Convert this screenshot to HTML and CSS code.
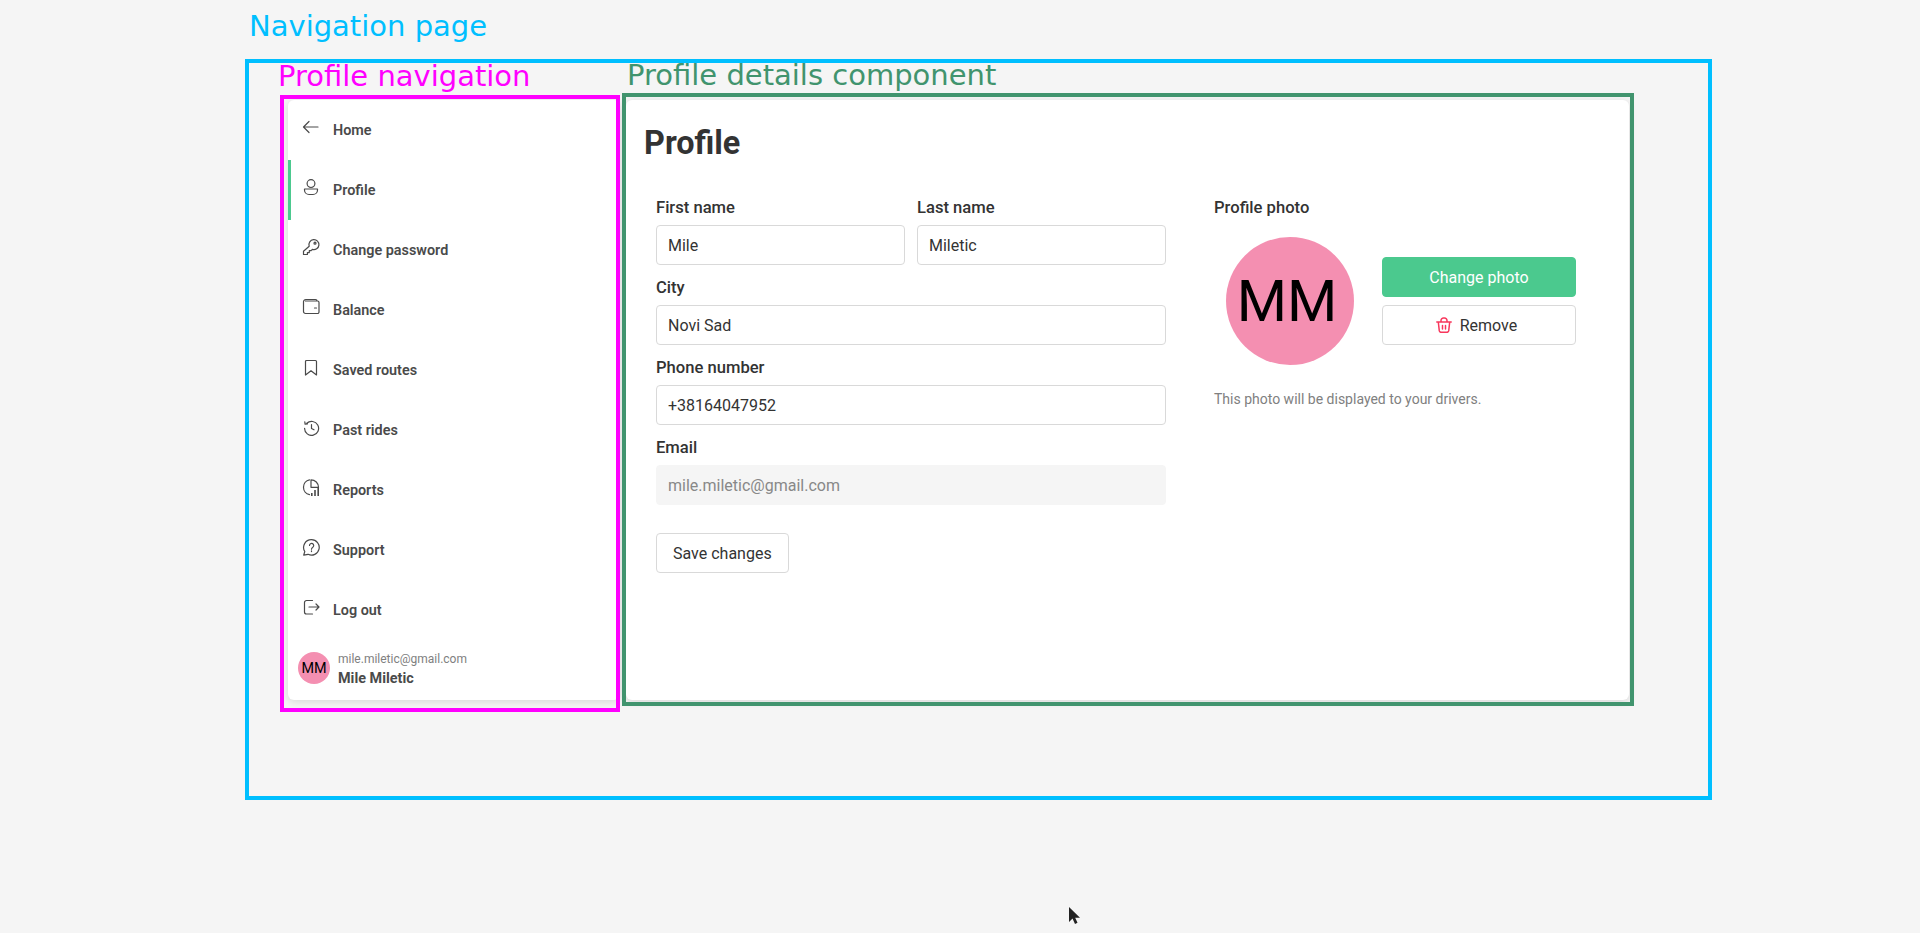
FILE: index.html
```html
<!DOCTYPE html>
<html lang="en">
<head>
  <meta charset="UTF-8">
  <title>Profile</title>
  <link rel="stylesheet" href="styles.css">
</head>
<body>
  <div class="layout">
    <nav class="side-nav">
      <a class="nav-item">
        <svg class="nav-icon" viewBox="0 0 18 18"><path d="M16 9H1.500M7 3.500 1.500 9 7 14.500"/></svg>
        <span>Home</span>
      </a>
      <a class="nav-item active">
        <svg class="nav-icon" viewBox="0 0 18 18"><circle cx="9" cy="5.600" r="3.900"/><path d="M2.500 11h13v1a4.500 4.500 0 0 1-4.500 4.500H7A4.500 4.500 0 0 1 2.500 12z"/></svg>
        <span>Profile</span>
      </a>
      <a class="nav-item">
        <svg class="nav-icon" viewBox="0 0 18 18"><path d="M7.200 8.200a5 5 0 1 1 3.200 3.200l-1.300 1.300H7.300v1.900H5.400v1.900H1.500v-3.300z"/><circle cx="13" cy="5.200" r="1"/></svg>
        <span>Change password</span>
      </a>
      <a class="nav-item">
        <svg class="nav-icon" viewBox="0 0 18 18"><path d="M3.500 3h12a1.500 1.500 0 0 1 1.500 1.500v9.500a1.500 1.500 0 0 1-1.500 1.500h-12A2 2 0 0 1 1.500 13.500v-9A2.500 2.500 0 0 1 4 1.500h9.500a1.500 1.500 0 0 1 1.500 1.500M12.500 10h2"/></svg>
        <span>Balance</span>
      </a>
      <a class="nav-item">
        <svg class="nav-icon" viewBox="0 0 18 18"><path d="M4.500 2.500h9a1 1 0 0 1 1 1v13.500L9 12.800 3.500 17V3.500a1 1 0 0 1 1-1z"/></svg>
        <span>Saved routes</span>
      </a>
      <a class="nav-item">
        <svg class="nav-icon" viewBox="0 0 18 18"><path d="M4.800 5.300a7 7 0 1 1-2.200 5M2.800 3.800l.3 2.300 2.400-.3M9.500 6.500v4l2.500 1.300"/></svg>
        <span>Past rides</span>
      </a>
      <a class="nav-item">
        <svg class="nav-icon" viewBox="0 0 18 18"><path d="M7.500 1.900a7.500 7.500 0 0 0 0 14.700M9 1.800a7.500 7.500 0 0 1 7.500 7.500H9z"/><path class="bars" d="M9.800 18v-3M13 18v-6M16.200 18V9"/></svg>
        <span>Reports</span>
      </a>
      <a class="nav-item">
        <svg class="nav-icon" viewBox="0 0 18 18"><path d="M9.500 1.700a7.700 7.700 0 1 1-3.400 14.600l-4.400.9 1.100-3.700A7.700 7.700 0 0 1 9.500 1.700z"/><path d="M7.500 7.500a2.100 2.100 0 1 1 3.300 1.700c-.9.600-1.300 1-1.300 2"/><path d="M9.500 12.800v.8"/></svg>
        <span>Support</span>
      </a>
      <a class="nav-item">
        <svg class="nav-icon" viewBox="0 0 18 18"><path d="M10.500 2.500h-6a2 2 0 0 0-2 2v9.500a2 2 0 0 0 2 2h6M7 9h10M14 6l3 3-3 3"/></svg>
        <span>Log out</span>
      </a>
      <div class="nav-user">
        <div class="avatar-small">MM</div>
        <div class="user-text">
          <div class="user-email">mile.miletic@gmail.com</div>
          <div class="user-name">Mile Miletic</div>
        </div>
      </div>
    </nav>

    <main class="details">
      <h1 class="title">Profile</h1>
      <div class="details-body">
        <form class="form">
          <div class="row">
            <div class="field">
              <label>First name</label>
              <input type="text" value="Mile">
            </div>
            <div class="field">
              <label>Last name</label>
              <input type="text" value="Miletic">
            </div>
          </div>
          <div class="field">
            <label>City</label>
            <input type="text" value="Novi Sad">
          </div>
          <div class="field">
            <label>Phone number</label>
            <input type="text" value="+38164047952">
          </div>
          <div class="field">
            <label>Email</label>
            <input class="disabled" type="text" value="mile.miletic@gmail.com" disabled>
          </div>
          <button class="btn save" type="button">Save changes</button>
        </form>

        <section class="photo">
          <label>Profile photo</label>
          <div class="photo-row">
            <div class="avatar-big">MM</div>
            <div class="photo-buttons">
              <button class="btn green" type="button">Change photo</button>
              <button class="btn remove" type="button">
                <svg class="trash" viewBox="0 0 16 16"><path d="M.8 5h14.400M2.300 5l1 8.900A1.800 1.800 0 0 0 5.100 15.300h5.800a1.800 1.800 0 0 0 1.800-1.400l1-8.900M5 5V3.500a2.500 2.500 0 0 1 2.500-2.500h1A2.500 2.500 0 0 1 11 3.500V5M6.500 8.500v3.500M9.500 8.500v3.500"/></svg>
                Remove
              </button>
            </div>
          </div>
          <p class="photo-note">This photo will be displayed to your drivers.</p>
        </section>
      </div>
    </main>
  </div>

  <!-- annotation frames drawn over the screen -->
  <div class="frame frame-page"></div>
  <div class="frame frame-nav"></div>
  <div class="frame frame-details"></div>
  <div class="note note-page">Navigation page</div>
  <div class="note note-nav">Profile navigation</div>
  <div class="note note-details">Profile details component</div>

  <svg class="cursor" viewBox="0 0 12 18"><path d="M1 0v15l3.500-3.500L7 17l2.500-1.200-2.300-5H12z"/></svg>
</body>
</html>
```

FILE: styles.css
```css
* {
  box-sizing: border-box;
}
html, body {
  height: 100%;
}
body {
  margin: 0;
  background-color: #f5f5f5;
  font-family: Roboto, sans-serif;
  color: #333;
  overflow: hidden;
  position: relative;
}
.layout {
  display: flex;
  gap: 6px;
  padding: 100px 0 0 288px;
}

/* left nav */
.side-nav {
  width: 332px;
  height: 600px;
  background-color: #fff;
  border-radius: 6px;
  box-shadow: 0 2px 8px rgba(0, 0, 0, 0.12);
}
.nav-item {
  display: flex;
  align-items: center;
  gap: 13px;
  height: 60px;
  padding-left: 14px;
  font-size: 14.4px;
  font-weight: 600;
  color: #4a4a4a;
}
.nav-item.active {
  border-left: 3px solid #4cc98f;
  padding-left: 11px;
}
.nav-icon {
  width: 18px;
  height: 18px;
  margin-bottom: 6px;
  flex-shrink: 0;
  fill: none;
  stroke: #4a4a4a;
  stroke-width: 1.2;
  stroke-linecap: round;
  stroke-linejoin: round;
}
.nav-icon .bars {
  stroke-width: 1.6;
  stroke-linecap: butt;
}
.nav-user {
  display: flex;
  align-items: center;
  gap: 8px;
  height: 60px;
  padding: 0 0 4px 10px;
}
.avatar-small {
  width: 32px;
  height: 32px;
  border-radius: 50%;
  background-color: #f48fb1;
  color: #000;
  font-size: 14.4px;
  display: flex;
  align-items: center;
  justify-content: center;
}
.user-text {
  margin-top: 3px;
}
.user-email {
  font-size: 12px;
  line-height: 18px;
  color: #808080;
}
.user-name {
  font-size: 14.4px;
  line-height: 22px;
  font-weight: 700;
  color: #4a4a4a;
}

/* details card */
.details {
  width: 1003px;
  height: 600px;
  background-color: #fff;
  border-radius: 6px;
  box-shadow: 0 2px 8px rgba(0, 0, 0, 0.12);
  padding: 21px 18px;
}
.title {
  margin: 0;
  font-size: 32.4px;
  line-height: 44px;
  font-weight: 700;
  color: #333;
}
.details-body {
  display: flex;
  gap: 48px;
  padding: 30px 12px 0;
}
.form {
  width: 510px;
}
.row {
  display: flex;
  gap: 12px;
}
.row .field {
  flex: 1;
}
.field {
  margin-bottom: 10px;
}
label {
  display: block;
  height: 30px;
  padding-top: 1px;
  font-size: 16.6px;
  line-height: 24px;
  font-weight: 500;
  color: #333;
}
input {
  display: block;
  width: 100%;
  height: 40px;
  padding: 0 11px;
  font-family: Roboto, sans-serif;
  font-size: 16px;
  color: #333;
  background-color: #fff;
  border: 1px solid #d9d9d9;
  border-radius: 4px;
}
input.disabled {
  background-color: #f5f5f5;
  border-color: #f5f5f5;
  color: #888;
}
.btn {
  display: flex;
  align-items: center;
  justify-content: center;
  gap: 8px;
  height: 40px;
  padding: 0 16px;
  font-family: Roboto, sans-serif;
  font-size: 16px;
  color: #333;
  background-color: #fff;
  border: 1px solid #d9d9d9;
  border-radius: 4px;
}
.btn.green {
  background-color: #4bc98e;
  border-color: #4bc98e;
  color: #fff;
}
.btn.remove {
  padding-right: 21px;
}
.save {
  margin-top: 28px;
}

/* photo column */
.photo {
  width: 362px;
}
.photo label {
  margin-bottom: 12px;
}
.photo-row {
  display: flex;
  align-items: center;
  gap: 28px;
  padding-left: 12px;
}
.avatar-big {
  width: 128px;
  height: 128px;
  border-radius: 50%;
  background-color: #f48fb1;
  color: #000;
  font-size: 57.6px;
  padding-right: 6px;
  display: flex;
  align-items: center;
  justify-content: center;
}
.photo-buttons {
  width: 194px;
  display: flex;
  flex-direction: column;
  gap: 8px;
}
.trash {
  width: 16px;
  height: 16px;
  fill: none;
  stroke: #f8375c;
  stroke-width: 1.5;
  stroke-linecap: round;
  stroke-linejoin: round;
}
.photo-note {
  margin: 24px 0 0;
  font-size: 14px;
  line-height: 20px;
  color: #808080;
}

/* annotations */
.frame {
  position: absolute;
  border: 4px solid;
}
.frame-page {
  left: 245px;
  top: 59px;
  width: 1467px;
  height: 741px;
  border-color: #00bfff;
}
.frame-nav {
  left: 280px;
  top: 95px;
  width: 340px;
  height: 617px;
  border-color: #ff00ff;
}
.frame-details {
  left: 622px;
  top: 93px;
  width: 1012px;
  height: 613px;
  border-color: #41946e;
}
.note {
  position: absolute;
  font-family: "DejaVu Sans", sans-serif;
  font-size: 29px;
  line-height: 32px;
  white-space: nowrap;
}
.note-page {
  left: 249px;
  top: 10px;
  color: #00bfff;
}
.note-nav {
  left: 278px;
  top: 60px;
  color: #ff00ff;
}
.note-details {
  left: 627px;
  top: 59px;
  color: #41946e;
}
.cursor {
  position: absolute;
  left: 1068px;
  top: 907px;
  width: 12px;
  height: 18px;
  fill: #222;
}
```
